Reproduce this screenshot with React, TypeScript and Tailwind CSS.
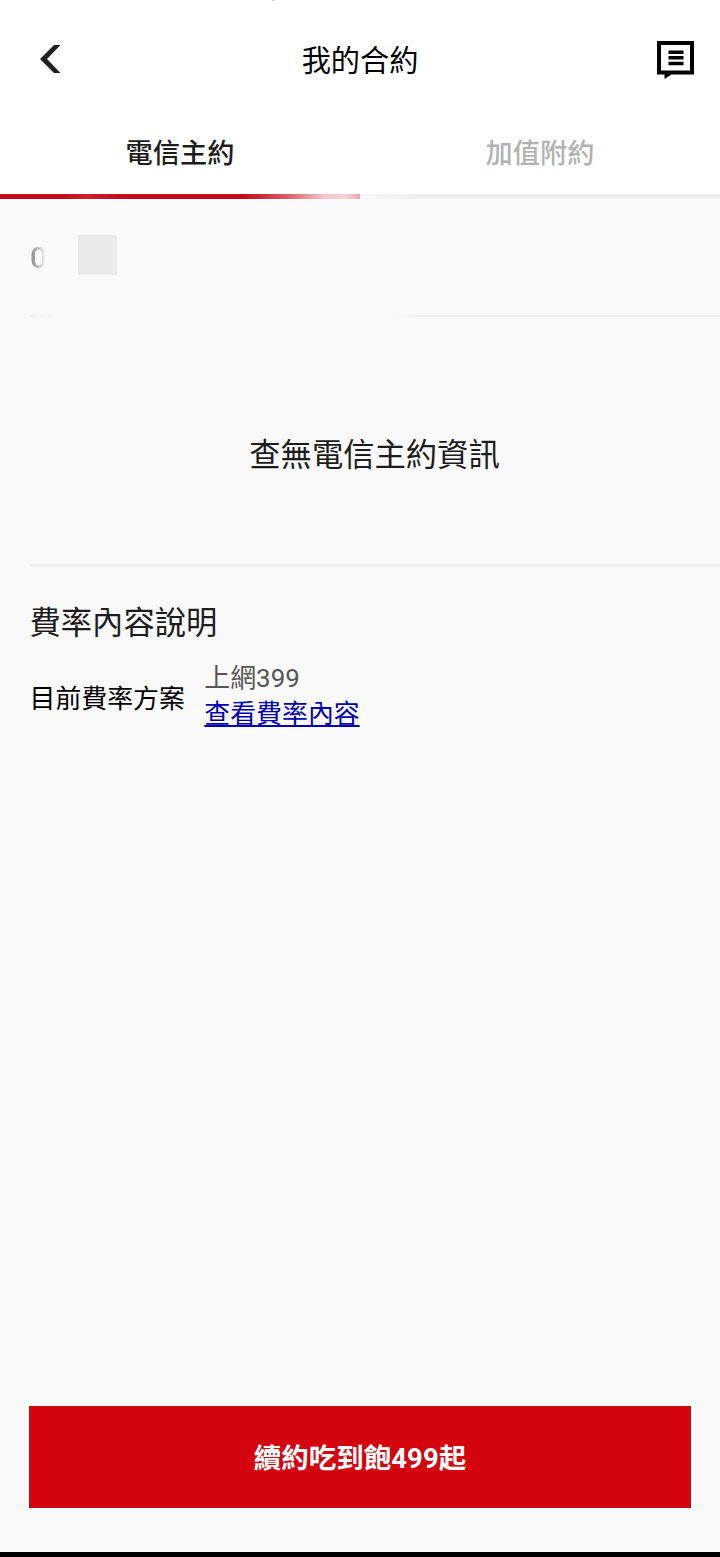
import { useState } from 'react'

const tabs = ['電信主約', '加值附約']

function BackIcon() {
  return (
    <svg width="21" height="28" viewBox="0 0 21 28" fill="#202020">
      <path d="M14 0h6.5L7 14l13.5 14H14L0 14z" />
    </svg>
  )
}

function MessageIcon() {
  return (
    <svg width="37" height="38" viewBox="0 0 37 38">
      <path d="M0 0h37v33.5H14.5L7.5 38v-4.5H0zM4 4v25.5h29V4z" fillRule="evenodd" fill="#000" />
      <path d="M11.5 9.5H26.5v3.5H11.5zM11.5 15H26.5v3.5H11.5zM11.5 20.7H26.5v3.5H11.5z" fill="#000" />
    </svg>
  )
}

export default function App() {
  const [active, setActive] = useState(0)

  return (
    <div className="flex flex-col w-[720px] h-[1557px] bg-[#f9f9f9] text-[#1c1c1c] font-[Roboto,'Noto_Sans_CJK_TC',sans-serif] overflow-hidden">
      <header className="relative flex items-center justify-between h-[118px] pl-10 pr-[26px] bg-white text-black">
        <span className="absolute top-0 left-[272px] w-[3px] h-px bg-gray-300" />
        <button>
          <BackIcon />
        </button>
        <h1 className="absolute inset-x-0 pt-1 text-center text-[29.2px] leading-[40px] pointer-events-none">我的合約</h1>
        <button className="mt-0.5">
          <MessageIcon />
        </button>
      </header>

      <nav className="grid grid-cols-2 h-[76px] bg-white">
        {tabs.map((tab, i) => (
          <button
            key={tab}
            className={`pb-[3px] text-[27.2px] font-medium ${active === i ? 'text-[#1c1c1c]' : 'text-[#b2b2b2]'}`}
            onClick={() => setActive(i)}
          >
            {tab}
          </button>
        ))}
      </nav>
      <div className="grid grid-cols-2 h-[5px]">
        <div className="bg-[linear-gradient(to_right,#c40c1a_0,#c40c1a_17%,#cb202d_24%,#c40c1a_34%,#c40c1a_68%,#d9616a_80%,#f3c4c8_90%,#f6d2d5_96%,#eba5ab_100%)]" />
        <div className="bg-gradient-to-r from-[#f9f9f9] to-[#efefef] to-15%" />
      </div>

      <main className="flex flex-col flex-1">
        <section className="flex items-start h-[116px] pl-[30px] pt-9">
          <span className="w-12 h-10 pt-[3px] text-[30px] leading-[40px] font-medium bg-gradient-to-r from-[#858585] to-[#f9f9f9] to-33% bg-clip-text text-transparent">
            0
          </span>
          <span className="w-[39px] h-[39.5px] bg-[#eaeaea]" />
        </section>
        <div className="ml-[30px] h-0.5 bg-[linear-gradient(to_right,#eeeeee_0,#f9f9f9_25px,#f9f9f9_360px,#eeeeee_390px)]" />

        <section className="flex items-center justify-center h-[247px] pl-[29px] pt-[30px]">
          <p className="text-[31.3px] leading-[46px]">查無電信主約資訊</p>
        </section>
        <div className="ml-[30px] h-0.5 bg-[#eeeeee]" />

        <section className="px-[29.5px] pt-[35px]">
          <h2 className="text-[31.3px] leading-[46px]">費率內容說明</h2>
          <div className="flex items-center gap-[19.5px] mt-[13px] text-[25.9px] leading-9">
            <span className="pt-1.5 text-black">目前費率方案</span>
            <div className="flex flex-col">
              <span className="text-[#555555]">上網399</span>
              <a href="#" className="text-[#0000b0] underline decoration-2 underline-offset-2">
                查看費率內容
              </a>
            </div>
          </div>
        </section>

        <button className="mt-auto mb-11 mx-[29px] h-[102px] pt-1 bg-[#d3040d] border border-[#b3141b] text-white text-[27.5px] font-bold">
          續約吃到飽499起
        </button>
      </main>
      <div className="h-[5px] bg-black" />
    </div>
  )
}
